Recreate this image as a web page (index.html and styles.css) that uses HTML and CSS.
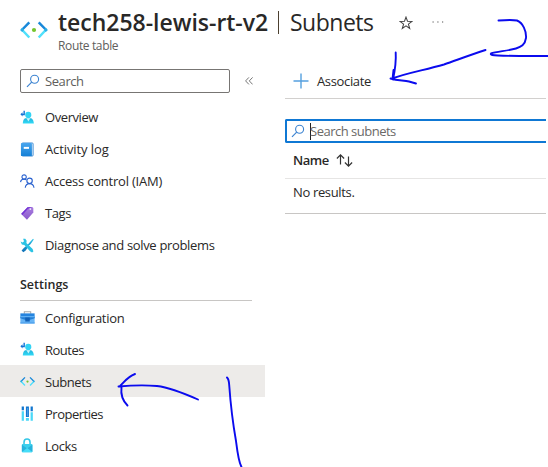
FILE: index.html
```html
<!DOCTYPE html>
<html lang="en">
<head>
<meta charset="utf-8">
<title>tech258-lewis-rt-v2 | Subnets</title>
<link rel="stylesheet" href="styles.css">
</head>
<body>
<svg class="defs" width="0" height="0" aria-hidden="true">
  <defs>
    <linearGradient id="cy" x1="0" y1="0" x2="0" y2="1"><stop offset="0" stop-color="#22b3dc"/><stop offset="1" stop-color="#32dcf8"/></linearGradient>
    <linearGradient id="bl" x1="0" y1="0" x2="0" y2="1"><stop offset="0" stop-color="#4aa6ee"/><stop offset="1" stop-color="#1580d6"/></linearGradient>
    <linearGradient id="pu" x1="0" y1="0" x2="0" y2="1"><stop offset="0" stop-color="#ab7fe0"/><stop offset="1" stop-color="#8a58cb"/></linearGradient>
    <linearGradient id="tool" x1="0" y1="0" x2="0" y2="1"><stop offset="0" stop-color="#2fc8ea"/><stop offset="1" stop-color="#0f6db4"/></linearGradient>
    <symbol id="subnet" viewBox="0 0 28 28">
      <path d="M9.3 6.3 1.8 14M18.7 6.3 26.2 14" fill="none" stroke="#1988d9" stroke-width="2.5"/>
      <path d="M1.8 13.5 9.3 21.5M26.2 13.5 18.7 21.5" fill="none" stroke="#50e0fb" stroke-width="2.5"/>
      <path d="M3.1 12.6 1.8 14l1.2 1.2M24.9 12.6l1.3 1.4-1.2 1.2" fill="none" stroke="#2aaee5" stroke-width="2.5"/>
      <circle cx="14" cy="14" r="2.1" fill="#76c42d"/>
    </symbol>
    <symbol id="route" viewBox="0 0 16 16">
      <path d="M5.2.8v4.7H2.7V7L.4 4.6l2.3-2.2V4h1V.8z" fill="#1472d4"/>
      <path d="M3 14.5c0-3 1-5.8 3.2-5.8h5c2.300 0 3.400 2.800 3.600 5.800z" fill="url(#cy)"/>
      <circle cx="8.800" cy="5.200" r="3.300" fill="#32d4f5"/>
      <path d="M6.900 8.900h4L9 12.200z" fill="#c8f6fd"/>
    </symbol>
    <symbol id="lens" viewBox="0 0 14 14">
      <circle cx="8.600" cy="5.300" r="4" fill="none" stroke="#3b83d1" stroke-width="1.100"/>
      <path d="M5.700 8.200 1 12.900" stroke="#3b83d1" stroke-width="1.200"/>
    </symbol>
  </defs>
</svg>

<div class="page">
  <header class="title-bar">
    <svg class="logo"><use href="#subnet"/></svg>
    <div class="titles">
      <h1><span class="t-name">tech258-lewis-rt-v2</span><span class="t-bar"></span><span class="t-page">Subnets</span></h1>
      <div class="kind">Route table</div>
    </div>
    <svg class="star" viewBox="0 0 14 14"><path d="M7 1.100 8.500 5.300 13 5.400 9.400 8.100 10.700 12.500 7 9.900 3.300 12.500 4.600 8.100 1 5.400 5.500 5.300z" fill="none" stroke="#444" stroke-width="1.050"/></svg>
    <svg class="dots" viewBox="0 0 12 2"><path d="M.5 1h1.200M5.300 1h1.200M10 1h1.200" stroke="#555" stroke-width="1.200"/></svg>
  </header>

  <div class="columns">
    <aside class="side">
      <div class="side-search">
        <div class="search"><svg class="lens"><use href="#lens"/></svg><span class="w-search">Search</span></div>
        <svg class="collapse" viewBox="0 0 8 8"><path d="M3.900.4.600 3.900l3.300 3.500M7.600.4 4.300 3.900l3.300 3.500" fill="none" stroke="#666" stroke-width=".9"/></svg>
      </div>
      <nav class="menu">
        <a class="item"><svg class="ico"><use href="#route"/></svg><span class="w-overview">Overview</span></a>
        <a class="item"><svg class="ico" viewBox="0 0 16 16"><rect x="2" y="1" width="12" height="14" rx="1" fill="#e4f1fc" stroke="#1b75cc" stroke-width=".8"/><rect x="1" y="1" width="11.700" height="14" rx="1" fill="url(#bl)"/><rect x="4" y="5.200" width="5.600" height="2.100" fill="#fff"/></svg><span class="w-activity">Activity log</span></a>
        <a class="item"><svg class="ico" viewBox="0 0 16 16" fill="none" stroke="#2a62cf" stroke-width="1.200"><circle cx="4.400" cy="3.200" r="2.300"/><path d="M.6 8.700c.2-2 1.500-3.200 3.800-3.200 1 0 1.800.2 2.400.6"/><circle cx="10.200" cy="7.300" r="2.900"/><path d="M5.600 14.700c.3-3 2-4.500 4.600-4.500s4.400 1.500 4.700 4.500"/></svg><span class="w-access">Access control (IAM)</span></a>
        <a class="item"><svg class="ico" viewBox="0 0 16 16"><path d="M8 1.300 13 1l1.200 1v5L7.400 14.700 1.300 8.500z" fill="url(#pu)"/><path d="M1.300 8.300 8 1.300 13 1l-4.500 1.800-6 6.700z" fill="#7433d5"/><circle cx="11" cy="3.200" r=".9" fill="#fff"/></svg><span class="w-tags">Tags</span></a>
        <a class="item"><svg class="ico" viewBox="0 0 16 16"><path d="m13.900.8.8.8-3.500 5-1.400 1.100-3.700 5.500-2.600 2-1.800-1.800 2.100-2.600 4.900-4.200 1-1.300z" fill="url(#tool)"/><path d="M3.300.9 5.600.8l1.500 2-.3 2.400 6.700 6.600.8 2.500-1.500 1.100-2.100-1.200-6.100-6.700L2 6.900.6 3.700l2.200 1.200 1.500-1.400z" fill="#2bc3e4"/></svg><span class="w-diagnose">Diagnose and solve problems</span></a>
      </nav>
      <h2 class="group"><span class="w-settings">Settings</span></h2>
      <nav class="menu settings">
        <a class="item"><svg class="ico" viewBox="0 0 16 16"><path d="M4.600 4V1.800h6.800V4" fill="none" stroke="#a4a8ab" stroke-width="1.100"/><rect x=".4" y="3.600" width="15.200" height="5" fill="#2584df"/><rect x=".4" y="6.500" width="15.200" height="7.900" fill="#66b4f6"/><path d="M.4 7.600h15.200v1.100L10 10.600H6L.4 8.700z" fill="#237ed5"/><rect x="5.600" y="8" width="4.800" height="4.300" fill="#1261b8"/><path d="M.4 13.200h15.200v1.200H.4z" fill="#4e9feb"/></svg><span class="w-config">Configuration</span></a>
        <a class="item"><svg class="ico"><use href="#route"/></svg><span class="w-routes">Routes</span></a>
        <a class="item active"><svg class="ico"><use href="#subnet"/></svg><span class="w-subnets">Subnets</span></a>
        <a class="item"><svg class="ico" viewBox="0 0 16 16"><path d="M1.800.5h2.400v4H1.800zM11.300.5h2.400v5h-2.400zM6.300.5h3.200v11.200H6.300z" fill="#1276cf"/><path d="M1.800 5.600h2.400v10H1.800zM11.300 6.700h2.400v8.900h-2.400zM6.300 12.800h3.200v2.800H6.300z" fill="#4bd8f8"/><path d="M7.500 2h.8v9h-.8z" fill="#55a9ed"/></svg><span class="w-props">Properties</span></a>
        <a class="item"><svg class="ico" viewBox="0 0 16 16"><path d="M4.300 7V4.500C4.300 2.500 5.700 1.100 7.500 1.100s3.200 1.400 3.200 3.400V7" fill="none" stroke="#35c7e7" stroke-width="1.700"/><rect x="2" y="6.500" width="11.200" height="8.800" rx=".8" fill="#3bcfed"/><path d="m2 7.200 5.600 4 5.600-4v7.400H2z" fill="#27b2dc"/><path d="m2 14.900 5.600-4.200 5.600 4.200-.7.400H2.700z" fill="#46ddf8"/></svg><span class="w-locks">Locks</span></a>
      </nav>
    </aside>

    <main class="main">
      <div class="toolbar"><svg class="plus" viewBox="0 0 16 16"><path d="M8 .5v15M.5 8h15" stroke="#55a0df" stroke-width="1.400"/></svg><span class="w-assoc">Associate</span></div>
      <div class="filter"><svg class="lens"><use href="#lens"/></svg><i class="caret"></i><span class="w-filter">Search subnets</span></div>
      <div class="head"><span class="w-name">Name</span><svg class="sort" viewBox="0 0 17 13"><path d="M4.500 10.500V1M.900 4.500 4.500.900l3.600 3.600M12.500 2.500V12M8.900 8.500l3.600 3.600 3.600-3.600" fill="none" stroke="#333" stroke-width="1.200"/></svg></div>
      <div class="row"><span class="w-none">No results.</span></div>
    </main>
  </div>

  <svg class="ink" viewBox="0 0 548 467" fill="none" stroke="#0b0bee" stroke-width="1.900" stroke-linecap="round" stroke-linejoin="round">
    <path d="M498.500 20.500C505 20 512 19.500 517 20.500C523 23 526.500 31 526 38C525 45 521 47 516 48.500C507 51 496 51.500 491 53.500C490 55 493 55.300 498 55.500C512 56.200 530 56 549 56"/>
    <path d="M485.500 50C470 55 457 60 444 64.500C425 70 407 73 392 78.500M395.700 52.500C396.300 62 395 70 393 79.500M393.500 70 392.500 79M390.500 78.500C398 81 404 80 409 81.500L416 83.500"/>
    <path d="M198 399.500C181 392 169 387.500 157 386C145 385 130 385.500 118.500 386.500M135 374C128 376.500 124 382 120.500 385.500M121.500 387C120.500 395 123 401 127.500 405.500"/>
    <path d="M227 377.500C228.500 379 229 381 229.200 385C231 410 233 424 236 441C237.500 453 238.500 462 241.500 467"/>
  </svg>
</div>
</body>
</html>
```
FILE: styles.css
```css
* { box-sizing: border-box; }
body { margin: 0; background: #fff; color: #292827; font: 13px/20px "Open Sans", "Noto Sans", sans-serif; }
.defs { display: block; height: 0; }
.page { position: relative; width: 548px; height: 467px; overflow: hidden; }
span { white-space: nowrap; }
svg { flex: none; display: block; }

.title-bar { display: flex; height: 69px; padding-left: 20px; }
.logo { width: 28px; height: 28px; margin-top: 16px; }
.titles { width: 350px; margin-left: 10px; padding-top: 6px; }
h1 { display: flex; align-items: center; height: 32px; margin: 0; font-size: 23px; line-height: 32px; font-weight: 600; }
.t-name { width: 220px; letter-spacing: -0.02px; }
.t-bar { width: 1px; height: 23px; background: #4c4030; }
.t-page { margin-left: 11px; font-weight: 400; letter-spacing: -0.5px; }
.kind { font-size: 12px; line-height: 16px; color: #605e5c; letter-spacing: -0.36px; }
.star { width: 14px; height: 14px; margin: 16px 0 0 -9px; }
.dots { width: 12px; height: 2px; margin: 21px 0 0 19px; }

.columns { display: flex; }
.side { width: 265px; }
.side-search { display: flex; align-items: center; padding-left: 20px; height: 24px; }
.search { display: flex; align-items: center; width: 210px; height: 24px; padding-left: 5px; border: 1px solid #777573; border-radius: 2px; color: #605e5c; }
.lens { width: 14px; height: 14px; margin-right: 5px; }
.collapse { width: 8px; height: 8px; margin-left: 15px; }
.menu { padding-top: 8px; }
.item { display: flex; align-items: center; height: 32px; padding-left: 20px; }
.item.active { background: #edebe9; }
.ico { width: 15px; height: 15px; margin-right: 10px; }
.group { width: 232px; height: 40px; margin: 0 0 0 20px; padding-top: 14px; border-bottom: 1px solid #c8c6c4; font-size: 12.5px; line-height: 20px; font-weight: 600; }
.settings { padding-top: 0; }
.settings span { padding-top: 2px; }

.w-search, .w-overview, .w-tags, .w-subnets, .w-locks { letter-spacing: -0.42px; }
.w-activity { letter-spacing: -0.1px; }
.w-access { letter-spacing: -0.22px; }
.w-diagnose { letter-spacing: -0.33px; }
.w-config { letter-spacing: -0.26px; }
.w-routes, .w-props, .w-filter, .w-name { letter-spacing: -0.5px; }
.w-assoc, .w-none { letter-spacing: -0.35px; }

.main { width: 261px; margin-left: 20px; }
.toolbar { display: flex; align-items: center; height: 30px; padding: 0 0 5px 8px; border-bottom: 1px solid #d2d0ce; }
.plus { width: 16px; height: 16px; margin-right: 8px; }
.filter { display: flex; align-items: center; height: 24px; margin-top: 20px; padding-left: 4px; border: 2px solid #0f78d4; border-right: 0; border-radius: 2px 0 0 2px; color: #6b6967; }
.caret { width: 1px; height: 17px; margin-right: -1px; background: #222; }
.head { display: flex; align-items: center; height: 36px; padding: 0 0 1px 8px; border-bottom: 1px solid #e6e5e4; font-weight: 600; }
.sort { width: 17px; height: 13px; margin-left: 7px; }
.row { display: flex; align-items: center; height: 35px; padding: 0 0 9px 8px; border-bottom: 1px solid #c8c6c4; }
.ink { position: absolute; left: 0; top: 0; width: 548px; height: 467px; pointer-events: none; }
```
